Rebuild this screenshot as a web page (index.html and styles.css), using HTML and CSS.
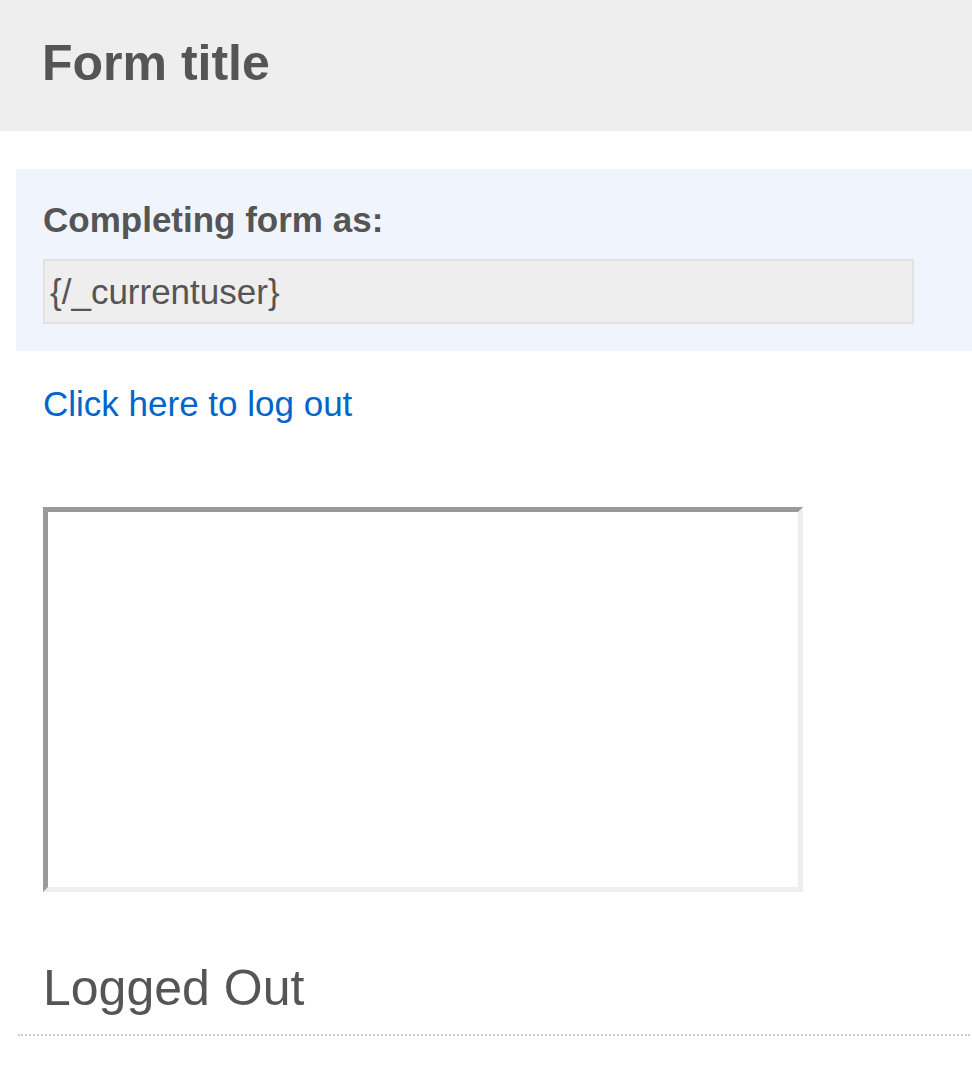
FILE: index.html
```html
<!DOCTYPE html>
<html lang="en">
<head>
    <meta charset="UTF-8">
    <meta name="viewport" content="width=device-width, initial-scale=1.0">
    <title>Form title</title>
    <link rel="stylesheet" href="styles.css">
</head>
<body>

<div class="form-header">
    <h1>Form title</h1>
</div>

<div class="form-body">
    <div class="user-panel">
        <label class="user-label">Completing form as:</label>
        <div class="user-field">{/_currentuser}</div>
    </div>

    <a class="logout-link" href="#">Click here to log out</a>

    <div class="frame-box"></div>

    <h2 class="section-title">Logged Out</h2>
</div>

</body>
</html>
```

FILE: styles.css
```css
body {
    margin: 0;
    font-family: "Liberation Sans", Arial, sans-serif;
    color: #555;
    background-color: #fff;
}
.form-header {
    background-color: #eee;
    height: 131px;
    padding: 38px 0 0 42px;
    box-sizing: border-box;
}
.form-header h1 {
    margin: 0;
    font-size: 50px;
    line-height: 50px;
    font-weight: bold;
}
.form-body {
    padding: 38px 0 0 16px;
}
.user-panel {
    background-color: #f0f5fd;
    padding: 31px 0 27px 27px;
}
.user-label {
    display: block;
    font-size: 35px;
    line-height: 40px;
    font-weight: bold;
    margin-bottom: 19px;
}
.user-field {
    width: 871px;
    height: 65px;
    box-sizing: border-box;
    border: 2px solid #e2e2e2;
    background-color: #eee;
    padding-left: 5px;
    font-size: 35px;
    line-height: 61px;
}
.logout-link {
    display: block;
    margin: 33px 0 0 27px;
    font-size: 35px;
    line-height: 40px;
    color: #0066cc;
    text-decoration: none;
}
.frame-box {
    width: 760px;
    height: 385px;
    box-sizing: border-box;
    margin: 83px 0 0 27px;
    border: 5px solid;
    border-color: #9a9a9a #eee #eee #9a9a9a;
}
.section-title {
    margin: 66px 0 0 2px;
    width: 952px;
    padding: 0 0 16px 25px;
    box-sizing: border-box;
    font-size: 50px;
    line-height: 60px;
    font-weight: normal;
    border-bottom: 2px dotted #ccc;
}
```
